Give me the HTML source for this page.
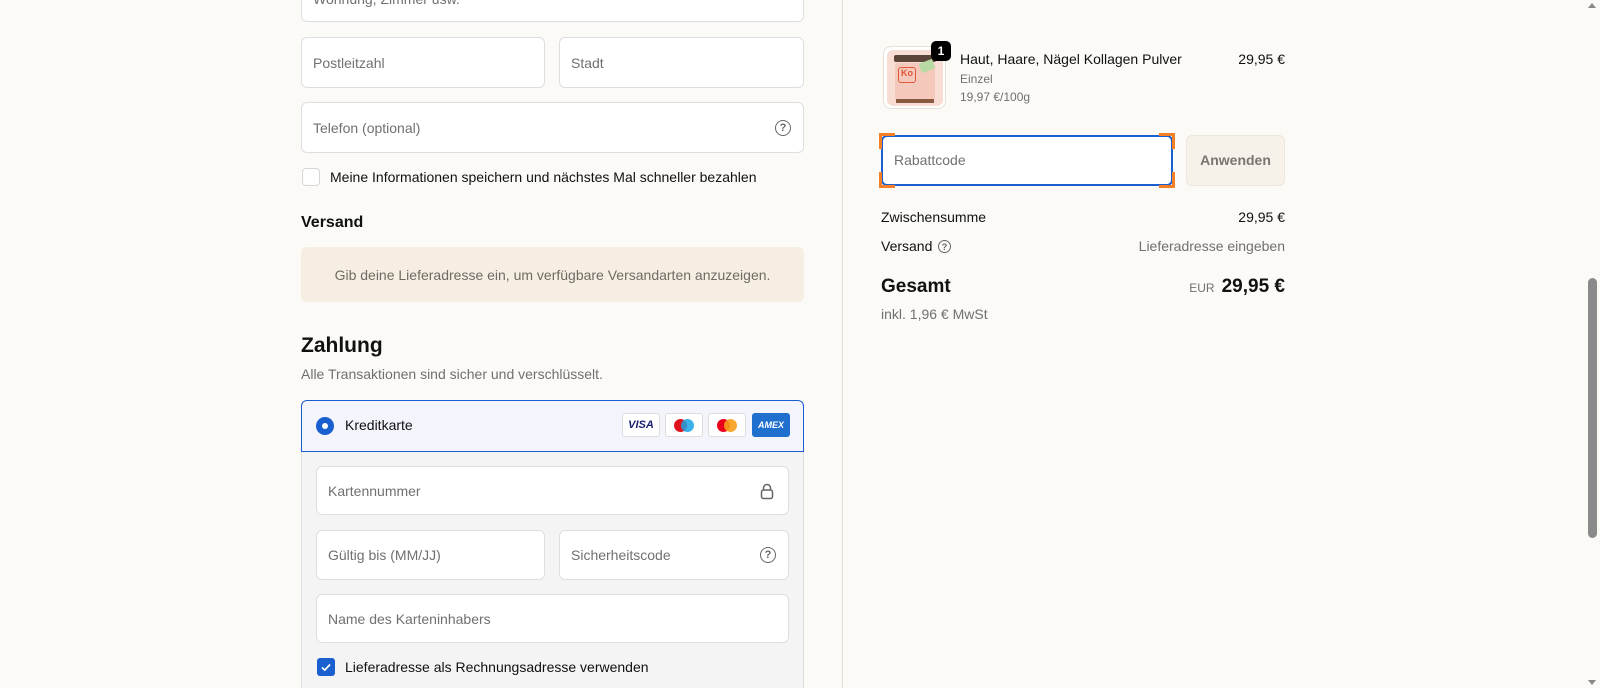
<!DOCTYPE html>
<html style="height:688px;overflow:hidden"><head><meta charset="utf-8"><style>
*{box-sizing:border-box;margin:0;padding:0}
body{width:1600px;height:688px;overflow:hidden;background:#fbfaf7;font-family:"Liberation Sans",sans-serif;color:#111;position:relative;font-size:14px}
.a{position:absolute}
.f{position:absolute;background:#fff;border:1px solid #dedede;border-radius:6px;color:#707070;font-size:14px;padding-left:11px;display:flex;align-items:center}
.q{position:absolute;right:12px;top:50%;margin-top:-8px;width:16px;height:16px;border:1.5px solid #666;border-radius:50%;font-size:11px;font-weight:bold;color:#666;display:flex;align-items:center;justify-content:center}
.t{white-space:nowrap}
.card{position:absolute;top:413px;width:38px;height:24px;border:1px solid #ddd;border-radius:3px;background:#fff}
</style></head><body>
<div class="a" style="left:842px;top:0;width:1px;height:688px;background:#e4dfd5"></div>
<div class="a" style="left:1588px;top:278px;width:9px;height:260px;background:#8a8a8a;border-radius:5px"></div>
<div class="a" style="left:1588px;top:3px;width:0;height:0;border-left:4.5px solid transparent;border-right:4.5px solid transparent;border-bottom:5px solid #888"></div>
<div class="a" style="left:1588px;top:680px;width:0;height:0;border-left:4.5px solid transparent;border-right:4.5px solid transparent;border-top:5px solid #888"></div>

<div class="f" style="left:301px;top:-29px;width:503px;height:51px;overflow:hidden"><span class="a t" style="left:11px;top:19px">Wohnung, Zimmer usw.</span></div>
<div class="f" style="left:301px;top:37px;width:244px;height:51px">Postleitzahl</div>
<div class="f" style="left:559px;top:37px;width:245px;height:51px">Stadt</div>
<div class="f" style="left:301px;top:102px;width:503px;height:51px">Telefon (optional)<span class="q">?</span></div>
<div class="a" style="left:302px;top:168px;width:18px;height:18px;border:1px solid #d5d5d5;border-radius:4px;background:#fff"></div>
<div class="a t" style="left:330px;top:169px;font-size:14px">Meine Informationen speichern und nächstes Mal schneller bezahlen</div>
<div class="a t" style="left:301px;top:214px;font-size:16px;font-weight:bold">Versand</div>
<div class="a" style="left:301px;top:247px;width:503px;height:55px;background:#f6eee3;border-radius:6px;color:#6f6a62;font-size:14px;display:flex;align-items:center;justify-content:center">Gib deine Lieferadresse ein, um verfügbare Versandarten anzuzeigen.</div>
<div class="a t" style="left:301px;top:334px;font-size:21px;font-weight:bold">Zahlung</div>
<div class="a t" style="left:301px;top:366px;font-size:14px;color:#707070">Alle Transaktionen sind sicher und verschlüsselt.</div>
<div class="a" style="left:301px;top:451px;width:503px;height:237px;background:#f4f4f4;border:1px solid #ddd;border-top:none;border-bottom:none"></div>
<div class="a" style="left:301px;top:400px;width:503px;height:52px;background:#f3f4fc;border:1px solid #1a5fd0;border-radius:6px 6px 0 0"></div>
<div class="a" style="left:316px;top:417px;width:18px;height:18px;border-radius:50%;background:#1a5fd0"></div>
<div class="a" style="left:322px;top:423px;width:6px;height:6px;border-radius:50%;background:#fff"></div>
<div class="a t" style="left:345px;top:417px;font-size:14px">Kreditkarte</div>
<div class="card" style="left:622px;display:flex;align-items:center;justify-content:center;font:italic bold 11px 'Liberation Sans',sans-serif;color:#1a1f71">VISA</div>
<div class="card" style="left:665px"><div class="a" style="left:8px;top:5px;width:13px;height:13px;border-radius:50%;background:#e0121d"></div><div class="a" style="left:15px;top:5px;width:13px;height:13px;border-radius:50%;background:#1aa2e4;opacity:.85"></div></div>
<div class="card" style="left:708px"><div class="a" style="left:8px;top:5px;width:13px;height:13px;border-radius:50%;background:#eb001b"></div><div class="a" style="left:15px;top:5px;width:13px;height:13px;border-radius:50%;background:#f79e1b;opacity:.9"></div></div>
<div class="card" style="left:752px;background:#1e6fce;border-color:#1e6fce;color:#fff;font:bold italic 9px 'Liberation Sans',sans-serif;display:flex;align-items:center;justify-content:center">AMEX</div>
<div class="f" style="left:316px;top:466px;width:473px;height:49px">Kartennummer
<svg class="a" style="right:14px;top:16px" width="14" height="17" viewBox="0 0 14 17"><path d="M3.5 7V5a3.5 3.5 0 0 1 7 0v2" fill="none" stroke="#666" stroke-width="1.5"/><rect x="1.5" y="7" width="11" height="8.5" rx="2" fill="none" stroke="#666" stroke-width="1.5"/></svg></div>
<div class="f" style="left:316px;top:530px;width:229px;height:50px">Gültig bis (MM/JJ)</div>
<div class="f" style="left:559px;top:530px;width:230px;height:50px">Sicherheitscode<span class="q">?</span></div>
<div class="f" style="left:316px;top:594px;width:473px;height:49px">Name des Karteninhabers</div>
<div class="a" style="left:317px;top:658px;width:18px;height:18px;border-radius:3px;background:#1a5fd0"><svg width="18" height="18"><path d="M5 9.5l2.8 2.6L13 6.5" fill="none" stroke="#fff" stroke-width="1.7"/></svg></div>
<div class="a t" style="left:345px;top:659px;font-size:14px">Lieferadresse als Rechnungsadresse verwenden</div>

<div class="a" style="left:883px;top:46px;width:63px;height:63px;border:1px solid #e5e0d8;border-radius:8px;background:#fff;overflow:hidden">
<div class="a" style="left:3px;top:3px;width:56px;height:56px;background:#f7ddd4;border-radius:6px"></div>
<div class="a" style="left:10px;top:8px;width:42px;height:7px;background:#5a4538;border-radius:2px"></div>
<div class="a" style="left:11px;top:16px;width:40px;height:38px;background:#f4c9bb;border-radius:3px"></div>
<div class="a" style="left:14px;top:20px;width:18px;height:16px;border:1.5px solid #e2573a;border-radius:3px;font:bold 9px sans-serif;color:#e2573a;text-align:center">Ko</div>
<div class="a" style="left:36px;top:14px;width:14px;height:10px;background:#b8d9a4;transform:rotate(-20deg)"></div>
<div class="a" style="left:12px;top:52px;width:38px;height:4px;background:#8a5a40"></div>
</div>
<div class="a" style="left:931px;top:41px;width:20px;height:20px;border-radius:5px;background:#000;color:#fff;font-size:12px;font-weight:bold;display:flex;align-items:center;justify-content:center">1</div>
<div class="a t" style="left:960px;top:51px;font-size:14px">Haut, Haare, Nägel Kollagen Pulver</div>
<div class="a t" style="left:960px;top:72px;font-size:12px;color:#707070">Einzel</div>
<div class="a t" style="left:960px;top:90px;font-size:12px;color:#707070">19,97 €/100g</div>
<div class="a t" style="right:315px;top:51px;font-size:14px">29,95 €</div>
<div class="a" style="left:881px;top:135px;width:292px;height:51px;background:#fff;border:2px solid #1a5fd0;border-radius:6px;color:#707070;font-size:14px;padding-left:11px;display:flex;align-items:center;padding-bottom:2px">Rabattcode</div>
<div class="a" style="left:879px;top:133px;width:16px;height:3px;background:#f47f24"></div><div class="a" style="left:879px;top:133px;width:3px;height:16px;background:#f47f24"></div>
<div class="a" style="left:1159px;top:133px;width:16px;height:3px;background:#f47f24"></div><div class="a" style="left:1172px;top:133px;width:3px;height:16px;background:#f47f24"></div>
<div class="a" style="left:879px;top:185px;width:16px;height:3px;background:#f47f24"></div><div class="a" style="left:879px;top:172px;width:3px;height:16px;background:#f47f24"></div>
<div class="a" style="left:1159px;top:185px;width:16px;height:3px;background:#f47f24"></div><div class="a" style="left:1172px;top:172px;width:3px;height:16px;background:#f47f24"></div>
<div class="a" style="left:1186px;top:135px;width:99px;height:51px;background:#f6f1e9;border:1px solid #ece6dc;border-radius:6px;color:#7a7570;font-size:14px;font-weight:bold;display:flex;align-items:center;justify-content:center;padding-bottom:2px">Anwenden</div>
<div class="a t" style="left:881px;top:209px;font-size:14px">Zwischensumme</div>
<div class="a t" style="right:315px;top:209px;font-size:14px">29,95 €</div>
<div class="a t" style="left:881px;top:238px;font-size:14px">Versand</div>
<div class="a" style="left:938px;top:240px;width:13px;height:13px;border:1.3px solid #666;border-radius:50%;font-size:9px;font-weight:bold;color:#666;display:flex;align-items:center;justify-content:center">?</div>
<div class="a t" style="right:315px;top:238px;font-size:14px;color:#707070">Lieferadresse eingeben</div>
<div class="a t" style="left:881px;top:276px;font-size:19px;font-weight:bold">Gesamt</div>
<div class="a t" style="right:315px;top:276px;font-size:19px;font-weight:bold"><span style="font-size:12px;font-weight:normal;color:#707070;margin-right:7px">EUR</span>29,95 €</div>
<div class="a t" style="left:881px;top:306px;font-size:14px;color:#707070">inkl. 1,96 € MwSt</div>
</body></html>
